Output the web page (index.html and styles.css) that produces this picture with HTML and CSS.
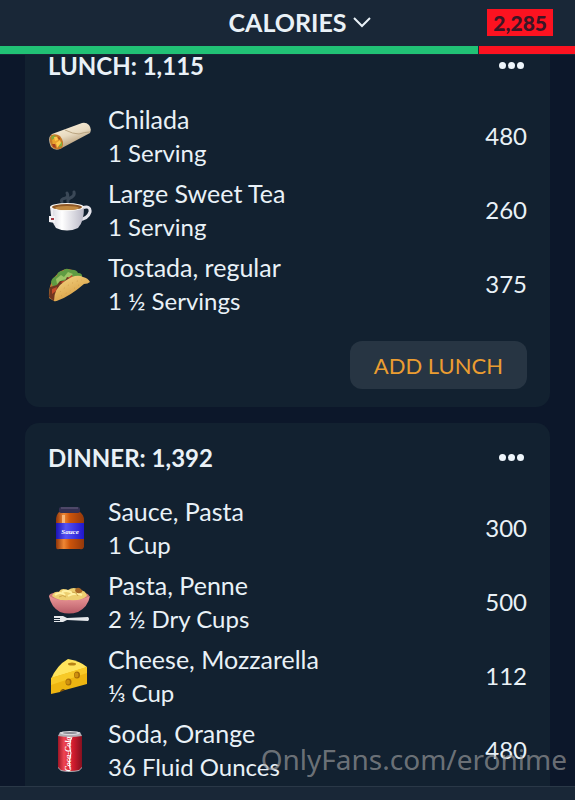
FILE: index.html
```html
<!DOCTYPE html>
<html lang="en">
<head>
<meta charset="utf-8">
<meta name="viewport" content="width=device-width, initial-scale=1">
<title>Calories</title>
<link rel="stylesheet" href="styles.css">
</head>
<body>

<header class="topbar">
  <button class="picker" type="button">CALORIES
    <svg class="chevron" viewBox="0 0 18 12"><path d="M1 2l8 8 8-8"/></svg>
  </button>
  <span class="badge">2,285</span>
</header>
<div class="budget">
  <span class="used" style="width:83.1%"></span>
  <span class="over"></span>
</div>

<main class="log">
  <section class="card">
    <div class="card-head">
      <h2>LUNCH: 1,115</h2>
      <button class="more" type="button" aria-label="Lunch options"><i></i><i></i><i></i></button>
    </div>
    <ul class="foods">
      <li>
        <svg class="icon" viewBox="0 0 44 44">
          <defs><linearGradient id="wrap" x1="0" y1="0" x2=".5" y2="1"><stop offset="0" stop-color="#fff8e6"/><stop offset=".55" stop-color="#e8dac0"/><stop offset="1" stop-color="#a68b66"/></linearGradient></defs>
          <path fill="url(#wrap)" d="M4 20L34 9Q38 8 41 11Q44 15 42 19L12 35Q7 37 3 33Q-1 24 4 20Z"/>
          <path fill="#c57a28" d="M3 21Q8 19 12 22Q17 28 14 34Q8 37 4 33Q0 26 3 21Z"/>
          <path fill="#e9a22e" d="M4 25l4-3 3 4-3 4-3 3Z"/>
          <path fill="#83a93a" d="M3 23l3-2 2 2-4 3ZM11 29l3-1 0 4-3 1Z"/>
          <path fill="#ffc84a" d="M8 29l4-3 1 3-4 5ZM6 23l3 0 1 3-3 1Z"/>
          <path fill="#a83e1e" d="M4 30l3 0 1 4-3-1ZM10 23l2 1-1 2Z"/>
          <path fill="none" stroke="#bba581" d="M17 16Q25 20 31 20Q37 18 42 18"/>
        </svg>
        <div class="food"><b>Chilada</b><span>1 Serving</span></div>
        <span class="kcal">480</span>
      </li>
      <li>
        <svg class="icon" viewBox="0 0 44 44">
          <defs><linearGradient id="cup"><stop offset="0" stop-color="#d4d3dc"/><stop offset=".35" stop-color="#fff"/><stop offset="1" stop-color="#b9b8c6"/></linearGradient></defs>
          <path fill="none" stroke="#3a4857" stroke-width="3" stroke-linecap="round" d="M14 14Q12 11 18 10Q21 8 19 5M20 14Q19 11 24 9Q27 7 26 4"/>
          <path fill="none" stroke="#e5e5ec" stroke-width="3" d="M34 20Q43 17 42 24Q40 31 30 32"/>
          <path fill="url(#cup)" d="M2 19H36Q36 34 30 40Q19 45 8 40Q3 34 2 19Z"/>
          <ellipse cx="19" cy="19" rx="17" ry="4" fill="#f8f6f1"/>
          <ellipse cx="19" cy="19" rx="15" ry="3" fill="#8e5827"/>
          <ellipse cx="19" cy="20" rx="12" ry="2" fill="#c28a42"/>
          <path fill="none" stroke="#fff" d="M4 21V28"/>
          <path fill="#f3f2f5" d="M1 28h6v7L1 34Z"/><path fill="#a43b44" d="M3 30h3v2H3Z"/>
        </svg>
        <div class="food"><b>Large Sweet Tea</b><span>1 Serving</span></div>
        <span class="kcal">260</span>
      </li>
      <li>
        <svg class="icon" viewBox="0 0 44 44">
          <defs><linearGradient id="shell" x1="0" y1="0" x2=".6" y2="1"><stop offset="0" stop-color="#f7d887"/><stop offset="1" stop-color="#d59a3e"/></linearGradient></defs>
          <path fill="#bd8137" d="M1 36Q0 18 13 9Q23 3 33 15L6 39Z"/>
          <path fill="#5f9b42" d="M3 20Q4 15 9 14Q9 9 15 9Q18 5 22 8Q28 7 30 11Q35 11 34 16L8 32Z"/>
          <path fill="#9cc365" d="M8 17l5-4 3 2 4-5 5 2-5 5-6 1-5 4Z"/>
          <path fill="#713620" d="M2 25l7-2 3-4 5 0 2-4 8 2L6 39 1 35Z"/>
          <path fill="#c34b2a" d="M4 27l5-2-1 4-4 3ZM13 20l4-2-2 4ZM20 16l4-3 1 3Z"/>
          <path fill="url(#shell)" d="M6 39Q6 26 17 19Q28 11 35 15Q40 16 42 20Q40 22 36 22Q22 34 11 38Q7 40 6 39Z"/>
          <path fill="none" stroke="#d09c4c" stroke-dasharray="1 4" d="M12 30Q22 20 34 18M13 34Q25 28 32 22"/>
        </svg>
        <div class="food"><b>Tostada, regular</b><span>1 ½ Servings</span></div>
        <span class="kcal">375</span>
      </li>
    </ul>
    <button class="add" type="button">ADD LUNCH</button>
  </section>

  <section class="card">
    <div class="card-head">
      <h2>DINNER: 1,392</h2>
      <button class="more" type="button" aria-label="Dinner options"><i></i><i></i><i></i></button>
    </div>
    <ul class="foods">
      <li>
        <svg class="icon" viewBox="0 0 44 44">
          <defs>
            <linearGradient id="jar"><stop offset="0" stop-color="#8f3509"/><stop offset=".28" stop-color="#ef8734"/><stop offset=".5" stop-color="#cc540b"/><stop offset="1" stop-color="#93380b"/></linearGradient>
            <linearGradient id="label"><stop offset="0" stop-color="#1b13b4"/><stop offset=".35" stop-color="#5653f4"/><stop offset="1" stop-color="#2016cb"/></linearGradient>
          </defs>
          <path fill="url(#jar)" d="M11 6H32Q36 9 36 14V41Q35 44 32 43H11Q8 44 8 41V14Q8 9 11 6Z"/>
          <path fill="#f7b477" d="M14 9h3v8h-3Z"/>
          <path fill="url(#label)" d="M8 17H36V33H8Z"/>
          <rect x="11" y="1" width="21" height="6" rx="2" fill="#343052"/>
          <path stroke="#68617f" d="M13 2h17"/>
          <text class="jar-text" x="22" y="28">Sauce</text>
        </svg>
        <div class="food"><b>Sauce, Pasta</b><span>1 Cup</span></div>
        <span class="kcal">300</span>
      </li>
      <li>
        <svg class="icon" viewBox="0 0 44 44">
          <defs><linearGradient id="bowl" x1="0" y1="0" x2="0" y2="1"><stop offset="0" stop-color="#ed9a9a"/><stop offset="1" stop-color="#b85b67"/></linearGradient></defs>
          <ellipse cx="21" cy="16" rx="20" ry="5" fill="#ce7779"/>
          <path fill="#edcf70" d="M4 16Q6 11 11 12Q13 7 20 10Q26 6 31 10Q38 10 39 16Q30 23 21 21Q10 21 4 16Z"/>
          <path fill="none" stroke="#fff0a2" stroke-width="2" d="M7 15q5-4 10 0M14 12q6-3 11 2M20 16q7-4 14-1"/>
          <path fill="none" stroke="#d0a64a" d="M11 17q4-3 7 0M24 12q5 0 6 4"/>
          <path fill="#a86625" d="M27 10q2-4 6-1q3 3-1 4q-4 1-5-3Z"/>
          <path fill="url(#bowl)" d="M1 16Q9 21 21 20Q33 21 42 16Q40 27 30 32Q21 35 12 32Q3 27 1 16Z"/>
          <path fill="#e5e8eb" d="M6 36H15L19 38 40 37Q42 39 40 41L19 40 15 42H6V41H12V40H6V39H12V38H6Z"/>
        </svg>
        <div class="food"><b>Pasta, Penne</b><span>2 ½ Dry Cups</span></div>
        <span class="kcal">500</span>
      </li>
      <li>
        <svg class="icon" viewBox="0 0 44 44">
          <path fill="#ffe45c" d="M3 25Q9 11 20 5Q32 7 39 13L31 18Z"/>
          <path fill="#edb511" d="M3 24L39 13V30L17 36Q14 34 12 38L3 40Z"/>
          <path fill="#f7c927" d="M3 24L39 13V19L3 31Z"/>
          <ellipse cx="24" cy="10" rx="4" ry="1.5" fill="#b88416"/>
          <ellipse cx="29" cy="21" rx="3" ry="3.5" fill="#a66c08"/>
          <ellipse cx="28.5" cy="21" rx="2" ry="2.5" fill="#ce910e"/>
          <ellipse cx="20.5" cy="28" rx="3" ry="3.5" fill="#a66c08"/>
          <ellipse cx="20" cy="28" rx="2" ry="2.5" fill="#ce910e"/>
          <path fill="#865606" d="M12 38q1-4 5-2l-2 1Z"/>
        </svg>
        <div class="food"><b>Cheese, Mozzarella</b><span>⅓ Cup</span></div>
        <span class="kcal">112</span>
      </li>
      <li>
        <svg class="icon" viewBox="0 0 44 44">
          <defs><linearGradient id="can"><stop offset="0" stop-color="#9e1525"/><stop offset=".25" stop-color="#ee4552"/><stop offset=".65" stop-color="#cf1b2d"/><stop offset="1" stop-color="#85101f"/></linearGradient></defs>
          <path fill="#b1adb3" d="M12 4H32L34 8V40L31 43Q22 45 13 43L10 40V8Z"/>
          <path fill="url(#can)" d="M10 8Q22 10 34 8V39L31 42Q22 44 13 42L10 39Z"/>
          <ellipse cx="22" cy="5" rx="10" ry="2" fill="#d9d9de"/>
          <ellipse cx="22" cy="5" rx="7" ry="1" fill="#8b8b93"/>
          <text class="can-text" x="-26" y="23" transform="rotate(-90)">Coca-Cola</text>
          <path fill="none" stroke="#fff" d="M24 9Q20 17 23 25Q20 33 22 41"/>
        </svg>
        <div class="food"><b>Soda, Orange</b><span>36 Fluid Ounces</span></div>
        <span class="kcal">480</span>
      </li>
    </ul>
  </section>
</main>

<footer class="tabbar"></footer>
<div class="watermark">OnlyFans.com/eronime</div>

</body>
</html>
```

FILE: styles.css
```css
* { box-sizing: border-box; }

body {
  margin: 0;
  height: 100vh;
  display: flex;
  flex-direction: column;
  overflow: hidden;
  position: relative;
  background: #0c172a;
  color: #e9f1f7;
  font-family: Lato, "Liberation Sans", sans-serif;
  font-size: 24px;
}

button {
  border: 0;
  background: none;
  color: inherit;
  font: inherit;
  cursor: pointer;
}

/* top bar */
.topbar {
  flex: none;
  height: 46px;
  padding: 0 22px 2px 46px;
  display: grid;
  grid-template-columns: 1fr auto 1fr;
  align-items: center;
  background: #192737;
}
.picker {
  grid-column: 2;
  display: flex;
  align-items: center;
  gap: 6px;
  padding: 0;
  font-size: 25px;
  font-weight: bold;
}
.chevron {
  width: 18px;
  height: 12px;
  fill: none;
  stroke: #e9f1f7;
  stroke-width: 2;
}
.badge {
  justify-self: end;
  padding: 0 6px;
  background: #fc1220;
  color: #3b1626;
  font-size: 21px;
  font-weight: 900;
  line-height: 27px;
}
.budget {
  flex: none;
  display: flex;
  gap: 1px;
  height: 9px;
  border-bottom: 1px solid #192737;
  background: #192737;
}
.used { background: #21c175; }
.over { flex: 1; background: #fc1220; }

/* meals */
.log {
  flex: 1;
  min-height: 0;
  overflow: hidden;
  padding: 0 25px;
}
.card {
  display: flex;
  flex-direction: column;
  margin-bottom: 16px;
  padding: 17px 23px 18px;
  border-radius: 14px;
  background: #122130;
}
/* list is scrolled a little under the top bar */
.card:first-child { margin-top: -24px; }
.card-head {
  display: flex;
  justify-content: space-between;
  align-items: center;
  height: 34px;
  margin-bottom: 21px;
}
.card-head h2 {
  margin: 0;
  font-size: 24px;
}
.more {
  display: flex;
  gap: 2px;
  padding: 8px 3px;
}
.more i {
  width: 7px;
  height: 7px;
  border-radius: 50%;
  background: #eef5fb;
}
.foods {
  display: grid;
  gap: 8px;
  margin: 0;
  padding: 0;
  list-style: none;
}
.foods li {
  display: flex;
  align-items: center;
  gap: 16px;
}
.icon {
  flex: none;
  width: 44px;
  height: 44px;
}
.food {
  flex: 1;
  line-height: 33px;
}
.food b, .food span { display: block; }
.food b { font-weight: normal; font-size: 25px; }
.kcal { padding-bottom: 2px; }
.jar-text, .can-text {
  fill: #fff;
  font-family: "Liberation Serif", serif;
  font-style: italic;
  font-weight: bold;
  text-anchor: middle;
}
.jar-text { font-size: 7px; }
.can-text { font-size: 8px; }
.add {
  align-self: flex-end;
  height: 48px;
  margin-top: 24px;
  padding: 0 24px;
  border-radius: 12px;
  background: #273543;
  color: #eb9d31;
  font-size: 22px;
}

.tabbar {
  flex: none;
  height: 14px;
  border-top: 1px solid #2a3847;
  background: #192737;
}
.watermark {
  position: absolute;
  right: 8px;
  bottom: 23px;
  color: rgba(160, 160, 160, .65);
  font-family: "Noto Sans", "Open Sans", sans-serif;
  font-size: 28px;
  line-height: 36px;
  pointer-events: none;
}
```
